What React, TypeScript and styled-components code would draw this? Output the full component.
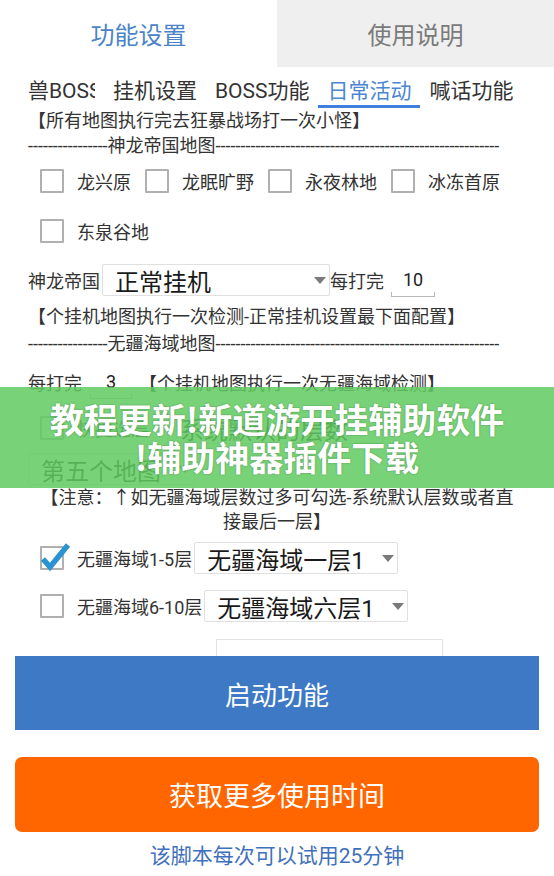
import React from "react";
import styled, { createGlobalStyle } from "styled-components";

const Global = createGlobalStyle`
  html, body { margin: 0; padding: 0; background: #fff; }
  body { font-family: Roboto, "Noto Sans CJK SC", "Noto Sans", sans-serif; color: #333; }
  * { box-sizing: border-box; }
`;

const Page = styled.div`
  position: relative;
  width: 554px;
  height: 876px;
  overflow: hidden;
  background: #fff;
  display: flex;
  flex-direction: column;
`;

const TopTabs = styled.div`
  display: grid;
  grid-template-columns: 1fr 1fr;
  height: 67px;
  flex-shrink: 0;
`;

const TopTab = styled.div<{ $active?: boolean }>`
  display: flex;
  align-items: center;
  justify-content: center;
  font-size: 24px;
  padding-bottom: 1px;
  background: ${(p) => (p.$active ? "#fff" : "#efefef")};
  color: ${(p) => (p.$active ? "#4a83c8" : "#7a7a7a")};
`;

const SubTabs = styled.div`
  display: flex;
  height: 41px;
  padding-left: 19px;
  flex-shrink: 0;
`;

const SubTab = styled.div<{ $active?: boolean }>`
  display: flex;
  align-items: center;
  padding: 2px 9px 0;
  font-size: 21px;
  white-space: nowrap;
  color: ${(p) => (p.$active ? "#4a86d2" : "#333")};
  box-shadow: ${(p) => (p.$active ? "inset 0 -3px 0 #3f80dc" : "none")};
`;

const Clip = styled.span`
  display: inline-block;
  width: 67px;
  overflow: hidden;
  white-space: nowrap;
`;

const Line = styled.div<{ $h?: number; $mt?: number }>`
  height: ${(p) => p.$h ?? 25}px;
  line-height: ${(p) => p.$h ?? 25}px;
  margin-top: ${(p) => p.$mt ?? 0}px;
  padding-left: 28px;
  font-size: 18px;
  white-space: nowrap;
  color: #333;
  flex-shrink: 0;
`;

const DashLine = styled(Line)`
  overflow: hidden;
`;

const CheckGrid = styled.div`
  display: flex;
  flex-wrap: wrap;
  padding-left: 40px;
  column-gap: 14px;
  row-gap: 4px;
  flex-shrink: 0;
`;

const CheckItem = styled.label`
  display: flex;
  align-items: center;
  gap: 13px;
  height: 46px;
  font-size: 18px;
  color: #333;
`;

const Box = styled.span`
  position: relative;
  display: inline-block;
  width: 24px;
  height: 24px;
  border: 2px solid #b0b0b0;
  border-radius: 1px;
  flex-shrink: 0;
`;

const Tick = styled.svg`
  position: absolute;
  left: -2px;
  top: -6px;
  overflow: visible;
`;

const Check = ({ checked }: { checked?: boolean }) => (
  <Box>
    {checked && (
      <Tick width="30" height="30" viewBox="0 0 30 30">
        <polyline
          points="3,17 10,25 28,3"
          fill="none"
          stroke="#2a93d2"
          strokeWidth="5.5"
          strokeLinejoin="miter"
        />
      </Tick>
    )}
  </Box>
);

const Row = styled.div<{ $mt?: number; $h?: number; $pl?: number }>`
  display: flex;
  align-items: center;
  height: ${(p) => p.$h ?? 34}px;
  margin-top: ${(p) => p.$mt ?? 0}px;
  padding-left: ${(p) => p.$pl ?? 28}px;
  font-size: 18px;
  color: #333;
  white-space: nowrap;
  flex-shrink: 0;
`;

const Label = styled.span<{ $ml?: number; $size?: number }>`
  margin-left: ${(p) => p.$ml ?? 0}px;
  font-size: ${(p) => p.$size ?? 18}px;
`;

const Select = styled.div<{ $w: number; $ml?: number }>`
  position: relative;
  display: flex;
  align-items: center;
  width: ${(p) => p.$w}px;
  height: 32px;
  margin-left: ${(p) => p.$ml ?? 0}px;
  padding-left: 12px;
  border: 1px solid #e0e0e0;
  border-radius: 2px;
  font-size: 24px;
  color: #1a1a1a;
  background: #fff;
  flex-shrink: 0;
`;

const Arrow = styled.span`
  position: absolute;
  right: 3px;
  top: 50%;
  margin-top: -3px;
  width: 0;
  height: 0;
  border-left: 6px solid transparent;
  border-right: 6px solid transparent;
  border-top: 7px solid #7a7a7a;
`;

const Input = styled.div<{ $w: number; $ml?: number }>`
  position: relative;
  display: flex;
  align-items: center;
  justify-content: center;
  width: ${(p) => p.$w}px;
  height: 34px;
  margin-left: ${(p) => p.$ml ?? 0}px;
  font-size: 18px;
  color: #222;
  border-bottom: 1px solid #b8b8b8;
  &::before,
  &::after {
    content: "";
    position: absolute;
    bottom: 0;
    width: 1px;
    height: 4px;
    background: #b8b8b8;
  }
  &::before { left: 0; }
  &::after { right: 0; }
`;

const Warn = styled.div`
  margin-top: 1px;
  font-size: 18px;
  line-height: 24px;
  text-align: center;
  color: #333;
  flex-shrink: 0;
`;

const Stub = styled.div`
  margin: 9px 0 0 216px;
  width: 227px;
  height: 17px;
  border: 1px solid #e2e2e2;
  border-bottom: none;
  flex-shrink: 0;
`;

const Button = styled.div<{ $bg: string; $mt?: number; $h: number; $r?: number; $fs?: number }>`
  display: flex;
  align-items: center;
  justify-content: center;
  margin: ${(p) => p.$mt ?? 0}px 15px 0;
  height: ${(p) => p.$h}px;
  border-radius: ${(p) => p.$r ?? 0}px;
  background: ${(p) => p.$bg};
  color: #fff;
  font-size: ${(p) => p.$fs ?? 26}px;
  flex-shrink: 0;
`;

const Footer = styled.div`
  margin-top: 12px;
  height: 24px;
  line-height: 24px;
  text-align: center;
  font-size: 21px;
  color: #3f70bd;
`;

const Banner = styled.div`
  position: absolute;
  left: 0;
  right: 0;
  top: 387px;
  height: 101px;
  display: flex;
  flex-direction: column;
  align-items: center;
  justify-content: center;
  background: rgba(98, 204, 98, 0.86);
  color: #fff;
  font-family: "Noto Sans CJK SC", sans-serif;
  font-weight: 700;
  font-size: 34px;
  line-height: 38px;
  text-shadow: 0 0 2px rgba(0, 0, 0, 0.35);
  white-space: nowrap;
`;

const mapsA = ["龙兴原", "龙眠旷野", "永夜林地", "冰冻首原", "东泉谷地"];

export default function App() {
  return (
    <Page>
      <Global />
      <TopTabs>
        <TopTab $active>功能设置</TopTab>
        <TopTab>使用说明</TopTab>
      </TopTabs>
      <SubTabs>
        <SubTab>
          <Clip>兽BOSS</Clip>
        </SubTab>
        <SubTab>挂机设置</SubTab>
        <SubTab>BOSS功能</SubTab>
        <SubTab $active>日常活动</SubTab>
        <SubTab>喊话功能</SubTab>
      </SubTabs>
      <Line>【所有地图执行完去狂暴战场打一次小怪】</Line>
      <DashLine>{"-".repeat(16) + "神龙帝国地图" + "-".repeat(57)}</DashLine>
      <CheckGrid>
        {mapsA.map((m) => (
          <CheckItem key={m}>
            <Check />
            {m}
          </CheckItem>
        ))}
      </CheckGrid>
      <Row $mt={9}>
        <Label>神龙帝国</Label>
        <Select $w={228} $ml={2}>
          正常挂机
          <Arrow />
        </Select>
        <Label>每打完</Label>
        <Input $w={44} $ml={7}>10</Input>
      </Row>
      <Line $h={27} $mt={6}>【个挂机地图执行一次检测-正常挂机设置最下面配置】</Line>
      <DashLine $h={27}>{"-".repeat(16) + "无疆海域地图" + "-".repeat(57)}</DashLine>
      <Row $mt={8}>
        <Label>每打完</Label>
        <Input $w={42} $ml={8}>3</Input>
        <Label $ml={7}>【个挂机地图执行一次无疆海域检测】</Label>
      </Row>
      <Row $mt={5} $h={48} $pl={40}>
        <Check />
        <Label $ml={13}>快捷选层</Label>
        <Select $w={216} $ml={18}>
          系统默认的层数
        </Select>
      </Row>
      <Row $mt={1} $h={32}>
        <Select $w={167}>
          第五个地图
          <Arrow />
        </Select>
      </Row>
      <Warn>
        【注意：↑如无疆海域层数过多可勾选-系统默认层数或者直
        <br />
        接最后一层】
      </Warn>
      <Row $h={48} $pl={40}>
        <Check checked />
        <Label $ml={13}>无疆海域1-5层</Label>
        <Select $w={204} $ml={2}>
          无疆海域一层1
          <Arrow />
        </Select>
      </Row>
      <Row $h={48} $pl={40}>
        <Check />
        <Label $ml={13}>无疆海域6-10层</Label>
        <Select $w={204} $ml={2}>
          无疆海域六层1
          <Arrow />
        </Select>
      </Row>
      <Stub />
      <Button $bg="#3d79c5" $h={74}>启动功能</Button>
      <Button $bg="#ff6600" $h={75} $mt={27} $r={7} $fs={27}>获取更多使用时间</Button>
      <Footer>该脚本每次可以试用25分钟</Footer>
      <Banner>
        <div>教程更新!新道游开挂辅助软件</div>
        <div>!辅助神器插件下载</div>
      </Banner>
    </Page>
  );
}
